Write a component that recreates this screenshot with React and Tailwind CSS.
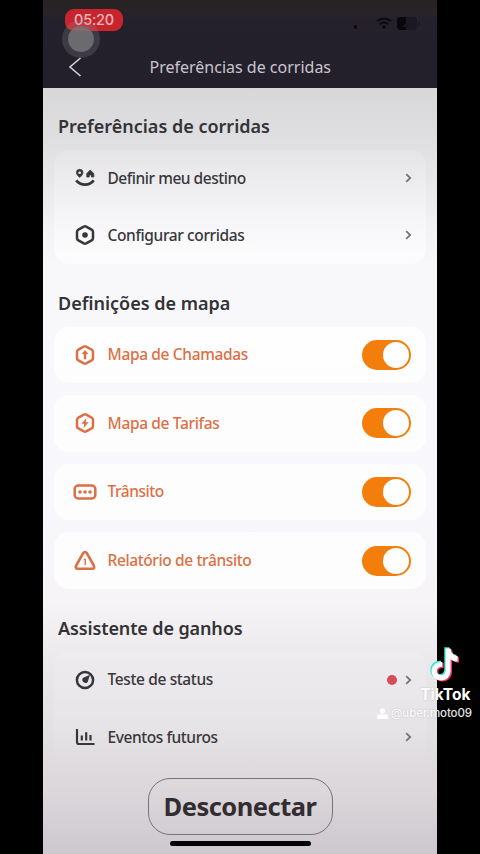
import React from 'react';

function Chevron() {
  return (
    <svg className="block h-[10px] w-[7px]" viewBox="0 0 7 10" fill="none" stroke="#77757a" strokeWidth="1.8">
      <path d="M1.2 1.2 5.2 5 1.2 8.8" />
    </svg>
  );
}

function Hexagon({ children }) {
  return (
    <svg className="block h-[20px] w-[24px]" viewBox="0 0 24 20" fill="none" stroke="currentColor" strokeWidth="2.5" strokeLinejoin="round">
      <path d="M10.8 1.7Q12 1 13.2 1.7L18.6 4.6Q20 5.4 20 6.8V13.2Q20 14.6 18.6 15.4L13.2 18.4Q12 19 10.8 18.4L5.4 15.4Q4 14.6 4 13.2V6.8Q4 5.4 5.4 4.6Z" />
      {children}
    </svg>
  );
}

const icons = {
  destination: (
    <svg className="block h-[20px] w-[24px]" viewBox="0 0 24 20" fill="none" stroke="currentColor">
      <path d="M6.7 9.6C4.7 7.6 3.4 6.4 3.4 4.6a3.3 3.3 0 0 1 6.6 0c0 1.8-1.3 3-3.3 5Z" fill="currentColor" strokeWidth=".7" />
      <circle cx="6.7" cy="4.7" r="1.3" fill="#ececee" stroke="none" />
      <path d="M13.8 9V5.6L17.2 2l3.600 3.600V9h-2.300V7h-2.300v2Z" fill="currentColor" strokeWidth=".8" strokeLinejoin="round" />
      <path d="M3.2 12.4c4.3 5.6 13.3 5.6 17.6 0" strokeWidth="2.7" />
    </svg>
  ),
  settings: (
    <Hexagon>
      <circle cx="12" cy="10" r="2.8" fill="currentColor" stroke="none" />
    </Hexagon>
  ),
  calls: (
    <Hexagon>
      <path d="M12 4.9 15.4 9H13.2v5.2h-2.4V9H8.6Z" fill="currentColor" stroke="none" />
    </Hexagon>
  ),
  fares: (
    <Hexagon>
      <path d="M13.4 4.9 8.4 10.7h2.9l-.8 4.5 5.1-6h-3Z" fill="currentColor" stroke="none" />
    </Hexagon>
  ),
  traffic: (
    <svg className="block h-[20px] w-[24px]" viewBox="0 0 24 20" fill="none" stroke="currentColor">
      <rect x="1.7" y="3.6" width="20.6" height="12.800" rx="3.500" strokeWidth="2.5" />
      <g fill="currentColor" stroke="none">
        <circle cx="7" cy="10" r="1.8" />
        <circle cx="12" cy="10" r="1.8" />
        <circle cx="17" cy="10" r="1.8" />
      </g>
    </svg>
  ),
  report: (
    <svg className="block h-[20px] w-[24px]" viewBox="0 0 24 20" fill="none" stroke="currentColor">
      <path d="M10.2 2.1Q12 0 13.8 2.1L20.8 14.5Q22 17.5 19.2 17.7H4.8Q2 17.5 3.2 14.5Z" strokeWidth="2.6" strokeLinejoin="round" />
      <path d="M10.7 8.4H12.2V14" strokeWidth="1.4" />
    </svg>
  ),
  status: (
    <svg className="block h-[20px] w-[24px]" viewBox="0 0 24 20" fill="none" stroke="currentColor">
      <circle cx="12" cy="10" r="8.1" strokeWidth="2.5" />
      <path d="m17 4.7-2.3 7.2a3 3 0 1 1-4.5-4.1Z" fill="currentColor" stroke="none" />
    </svg>
  ),
  events: (
    <svg className="block h-[20px] w-[24px]" viewBox="0 0 24 20" fill="none" stroke="currentColor">
      <path d="M4 2V15Q4 17 6 17H21.5" strokeWidth="2.2" />
      <path d="M8.8 8.6v4.8M13.2 5.2v8.2M17.5 7.9v5.5" strokeWidth="2.2" />
    </svg>
  ),
};

function SectionTitle({ children, className }) {
  return (
    <h2 className={`pl-[15px] font-['Noto_Sans',sans-serif] text-[18px] font-semibold leading-[24px] whitespace-nowrap text-[#343236] ${className}`}>
      {children}
    </h2>
  );
}

function LinkRow({ icon, label, spacing, dot }) {
  return (
    <div className="flex h-[57.3px] items-center pr-[14px] pl-[19px] text-[#38363a]">
      {icons[icon]}
      <span className={`ml-[10.5px] font-['Noto_Sans',sans-serif] text-[15.5px] font-medium whitespace-nowrap ${spacing}`}>{label}</span>
      <span className="ml-auto flex items-center gap-[8px]">
        {dot && <span className="h-[10px] w-[10px] rounded-full bg-[#d84c58]" />}
        <Chevron />
      </span>
    </div>
  );
}

function ToggleCard({ icon, label, spacing }) {
  return (
    <div className="flex h-[56.6px] items-center rounded-[15px] bg-white/80 pr-[15px] pl-[19px] text-[#dc7044]">
      {icons[icon]}
      <span className={`ml-[10.5px] font-['Noto_Sans',sans-serif] text-[15.5px] font-medium whitespace-nowrap ${spacing}`}>{label}</span>
      <span className="ml-auto flex h-[30px] w-[49px] items-center justify-end rounded-full bg-[#f47e0b] pr-[2px]">
        <span className="h-[26px] w-[26px] rounded-full bg-white" />
      </span>
    </div>
  );
}

function TikTokMark() {
  const note = 'M14 0H19C19.4 4.5 22 7 26 7.5V13C23.3 13 21 12.2 19 10.7V22C19 28 14.8 32 9.6 32C4.2 32 0 28.2 0 22.8C0 17 4.7 12.8 10.7 13.5V18.8C7.8 18 5.3 19.8 5.3 22.5C5.3 25 7.2 26.7 9.6 26.7C12.3 26.7 14 25 14 22Z';
  return (
    <svg className="block h-[36px] w-[30px]" viewBox="0 0 30 36">
      <path d={note} fill="#38e8d5" transform="translate(.3 .3)" />
      <path d={note} fill="#f4305d" transform="translate(3 2.5)" />
      <path d={note} fill="#fff" transform="translate(1.6 1.5)" />
    </svg>
  );
}

export default function App() {
  return (
    <div className="relative flex h-[854px] w-[480px] justify-center overflow-hidden bg-black">
      <main className="relative flex h-[854px] w-[394px] flex-col bg-[linear-gradient(180deg,#d8d8da_88px,#dfdfe1_140px,#e6e6e9_175px,#f1f1f4_220px,#f8f8fb_265px,#f8f7fb_500px,#f6f4f7_600px,#ebe8eb_665px,#e2dfe2_740px,#dbd7db_790px,#cdc8cd_854px)]">
        <header className="flex h-[87.5px] shrink-0 flex-col bg-[linear-gradient(180deg,#272325_0px,#272326_11px,#24212d_22px,#23202c_88px)]">
          <div className="flex h-[46px] items-start justify-between pt-[9px] pr-[16px] pl-[22px]">
            <span className="flex h-[22px] w-[58px] items-center justify-center rounded-[9px] bg-[#c9242e] font-['Inter',sans-serif] text-[14.5px] tracking-[-0.2px] font-medium text-[#edb9bd]">05:20</span>
            <svg className="mt-[6px] block h-[18px] w-[68px]" viewBox="0 0 68 18" fill="none">
              <rect x="1" y="10" width="3" height="4" rx="1" fill="#0a080f" />
              <path d="M8 13V8h3v5M13 13V5h3v8" stroke="#272027" strokeWidth="2" />
              <path d="M24 6.3q7-5.5 14 0M26.7 9.2q4.3-3.2 8.6 0" stroke="#0a080f" strokeWidth="2" />
              <circle cx="31" cy="12" r="1.7" fill="#0a080f" />
              <rect x="44" y="2" width="20" height="13" rx="4" fill="#1b1821" />
              <path d="M53 2h-5a4 4 0 0 0-4 4v5a4 4 0 0 0 4 4h5v-3h-4l4-4Z" fill="#09080d" />
              <path d="M66 6.5v4" stroke="#1b1821" strokeWidth="2" />
            </svg>
          </div>
          <div className="flex h-[42px] items-center">
            <svg className="ml-[25px] block h-[20px] w-[14px]" viewBox="0 0 14 20" fill="none" stroke="#d4d1d8" strokeWidth="1.6">
              <path d="M12.5 1 2 10l10.5 9" />
            </svg>
            <h1 className="ml-[67.5px] font-['Noto_Sans',sans-serif] text-[16px] leading-[20px] whitespace-nowrap text-[#c9c5cf]">Preferências de corridas</h1>
          </div>
        </header>

        <div className="flex grow flex-col pr-[11px]">
          <SectionTitle className="mt-[26px]">Preferências de corridas</SectionTitle>
          <section className="mt-[12px] ml-[11px] rounded-[15px] bg-[linear-gradient(180deg,#ffffff24,#ffffff40_40%,#ffffffa0)]">
            <LinkRow icon="destination" label="Definir meu destino" spacing="tracking-[-0.47px]" />
            <LinkRow icon="settings" label="Configurar corridas" spacing="tracking-[-0.38px]" />
          </section>

          <SectionTitle className="mt-[26.5px]">Definições de mapa</SectionTitle>
          <div className="mt-[12px] ml-[11px] flex flex-col gap-[12px]">
            <ToggleCard icon="calls" label="Mapa de Chamadas" spacing="tracking-[-0.35px]" />
            <ToggleCard icon="fares" label="Mapa de Tarifas" spacing="tracking-[-0.35px]" />
            <ToggleCard icon="traffic" label="Trânsito" spacing="tracking-[-0.45px]" />
            <ToggleCard icon="report" label="Relatório de trânsito" spacing="tracking-[-0.38px]" />
          </div>

          <SectionTitle className="mt-[27px] tracking-[-0.12px]">Assistente de ganhos</SectionTitle>
          <section className="mt-[11.5px] ml-[11px] h-[105px] overflow-hidden rounded-t-[15px] bg-[linear-gradient(180deg,#ffffff18,#ffffff20_60%,#ffffff08)]">
            <LinkRow icon="status" label="Teste de status" spacing="tracking-[-0.37px]" dot />
            <LinkRow icon="events" label="Eventos futuros" spacing="tracking-[-0.43px]" />
          </section>

          <div className="mt-[21.5px] flex flex-col items-center pl-[11px]">
            <button className="flex h-[57px] w-[185px] items-center justify-center rounded-[22px] border border-[#777379] font-['Noto_Sans',sans-serif] text-[25.5px] tracking-[-0.5px] font-bold text-[#312d31]">Desconectar</button>
            <span className="mt-[6.5px] h-[5px] w-[141px] rounded-full bg-black" />
          </div>
        </div>
        <span className="absolute top-[20px] left-[19px] h-[38px] w-[38px] rounded-full border-[6px] border-[#88888c]/25 bg-[#78787b]/85 bg-clip-padding" />
      </main>

      <aside className="absolute top-[647px] right-[8px] flex flex-col items-end font-['Inter',sans-serif] text-white">
        <div className="mr-[12px]"><TikTokMark /></div>
        <span className="mt-[2px] mr-[1.5px] text-[15.5px] leading-[20px] font-bold [text-shadow:0_0_2px_#0003]">TikTok</span>
        <div className="flex h-[18px] items-center gap-[3px] text-[11.5px] font-medium tracking-[-0.08px] text-white/90 [text-shadow:0_0_2px_#0003]">
          <svg className="block h-[12px] w-[11px]" viewBox="0 0 11 12" fill="#fff">
            <circle cx="5.5" cy="3" r="2.7" />
            <path d="M0 11V9q0-2.5 2.5-2.5h6Q11 6.5 11 9v2Z" />
          </svg>
          <span>@uber.moto09</span>
        </div>
      </aside>
    </div>
  );
}
